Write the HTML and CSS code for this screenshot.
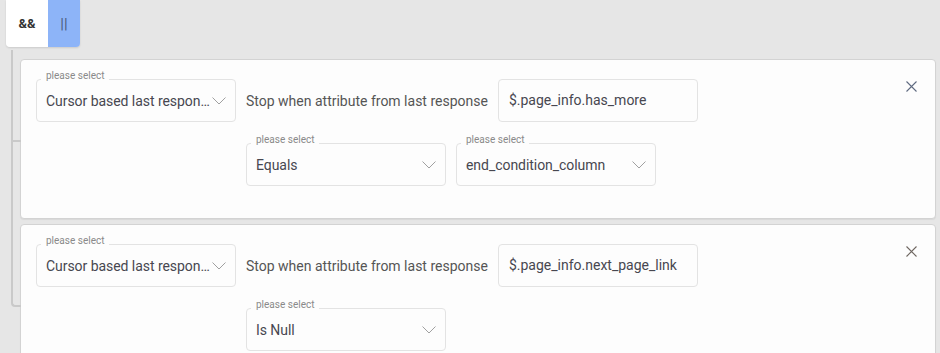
FILE: index.html
```html
<!DOCTYPE html>
<html>
	<head>
		<meta charset="UTF-8">
		<title>End condition</title>
		<link rel="stylesheet" href="styles.css">
	</head>
	<body>
		<div class="group">
			<div class="conj">
				<div class="conj-and">&amp;&amp;</div>
				<div class="conj-or">||</div>
			</div>

			<div class="children">
				<div class="rule">
					<div class="rule-body">
						<div class="field">
							<span class="field-label">please select</span>
							<span class="field-value">Cursor based last response attribute</span>
							<svg class="chev" width="14" height="8" viewBox="0 0 14 8"><polyline points="0.5,0.5 7,7 13.5,0.5" fill="none" stroke="#a0a0a0" stroke-width="1"/></svg>
						</div>
						<div class="rule-right">
							<div class="line">
								<span class="caption">Stop when attribute from last response</span>
								<div class="field input">$.page_info.has_more</div>
							</div>
							<div class="line">
								<div class="field">
									<span class="field-label">please select</span>
									<span class="field-value">Equals</span>
									<svg class="chev" width="14" height="8" viewBox="0 0 14 8"><polyline points="0.5,0.5 7,7 13.5,0.5" fill="none" stroke="#a0a0a0" stroke-width="1"/></svg>
								</div>
								<div class="field">
									<span class="field-label">please select</span>
									<span class="field-value">end_condition_column</span>
									<svg class="chev" width="14" height="8" viewBox="0 0 14 8"><polyline points="0.5,0.5 7,7 13.5,0.5" fill="none" stroke="#a0a0a0" stroke-width="1"/></svg>
								</div>
							</div>
						</div>
					</div>
					<div class="close">
						<svg width="11" height="11" viewBox="0 0 11 11"><path d="M0.5 0.5 L10.5 10.5 M10.5 0.5 L0.5 10.5" stroke="#5f6a80" stroke-width="1.1"/></svg>
					</div>
				</div>

				<div class="rule">
					<div class="rule-body">
						<div class="field">
							<span class="field-label">please select</span>
							<span class="field-value">Cursor based last response attribute</span>
							<svg class="chev" width="14" height="8" viewBox="0 0 14 8"><polyline points="0.5,0.5 7,7 13.5,0.5" fill="none" stroke="#a0a0a0" stroke-width="1"/></svg>
						</div>
						<div class="rule-right">
							<div class="line">
								<span class="caption">Stop when attribute from last response</span>
								<div class="field input">$.page_info.next_page_link</div>
							</div>
							<div class="line">
								<div class="field">
									<span class="field-label">please select</span>
									<span class="field-value">Is Null</span>
									<svg class="chev" width="14" height="8" viewBox="0 0 14 8"><polyline points="0.5,0.5 7,7 13.5,0.5" fill="none" stroke="#a0a0a0" stroke-width="1"/></svg>
								</div>
							</div>
						</div>
					</div>
					<div class="close">
						<svg width="11" height="11" viewBox="0 0 11 11"><path d="M0.5 0.5 L10.5 10.5 M10.5 0.5 L0.5 10.5" stroke="#6e6660" stroke-width="1.1"/></svg>
					</div>
				</div>
			</div>
		</div>
	</body>
</html>
```

FILE: styles.css
```css
body{
	margin: 0;
	padding: 0 4px 0 6px;
	background: #e6e6e6;
	font-family: Roboto, "Liberation Sans", sans-serif;
	font-size: 14px;
	color: #444;
	overflow: hidden;
}

/* and / or toggle */
.conj{
	display: flex;
	width: 74px;
	height: 47px;
	border-radius: 0 0 4px 4px;
	overflow: hidden;
	box-shadow: 0 1px 2px rgba(0,0,0,0.12);
}
.conj-and{
	width: 42px;
	background: #fff;
	font-weight: bold;
	font-size: 13px;
	color: #333;
	display: flex;
	align-items: center;
	justify-content: center;
}
.conj-or{
	flex: 1;
	background: #8db4f8;
	color: #4a5a7c;
	font-size: 15px;
	display: flex;
	align-items: center;
	justify-content: center;
}

.children{
	margin-top: 12px;
	margin-left: 14px;
	display: flex;
	flex-direction: column;
	gap: 5px;
}

/* one rule card */
.rule{
	position: relative;
	display: flex;
	background: #fdfdfd;
	border: 1px solid #d3d3d3;
	border-radius: 4px;
	padding: 19px 18px 32px 15px;
	box-shadow: 0 1px 1px rgba(0,0,0,0.06);
}
/* tree connectors */
.rule::before{
	content: "";
	position: absolute;
	left: -10px;
	top: -10px;
	width: 8px;
	height: calc(50% + 11px);
	border-left: 2px solid #c9c9c9;
	border-bottom: 2px solid #c9c9c9;
}
.rule::after{
	content: "";
	position: absolute;
	left: -10px;
	top: calc(50% + 1px);
	height: calc(50% + 6px);
	border-left: 2px solid #c9c9c9;
}
.rule:last-child::before{
	border-bottom-left-radius: 4px;
}
.rule:last-child::after{
	display: none;
}

.rule-body{
	flex: 1;
	display: flex;
	align-items: flex-start;
	gap: 10px;
}
.rule-right{
	display: flex;
	flex-direction: column;
	gap: 21px;
}
.line{
	display: flex;
	align-items: center;
	gap: 10px;
}
.caption{
	color: #555;
}

/* select / input box */
.field{
	position: relative;
	box-sizing: border-box;
	width: 200px;
	height: 43px;
	border: 1px solid #e3e3e3;
	border-radius: 4px;
	background: #fdfdfd;
	display: flex;
	align-items: center;
	padding: 0 9px 0 9px;
	color: #474750;
}
.field.input{
	padding-left: 10px;
	padding-bottom: 1px;
}
.field-label{
	position: absolute;
	left: 4px;
	top: -10px;
	padding: 0 5px;
	background: #fdfdfd;
	font-size: 10px;
	line-height: 12px;
	color: #8a8a8a;
}
.field-value{
	flex: 1;
	min-width: 0;
	white-space: nowrap;
	overflow: hidden;
	text-overflow: ellipsis;
	letter-spacing: -0.05px;
}
.chev{
	flex: none;
}

.close{
	width: 11px;
	height: 11px;
	margin-top: 2px;
	display: flex;
}
```
